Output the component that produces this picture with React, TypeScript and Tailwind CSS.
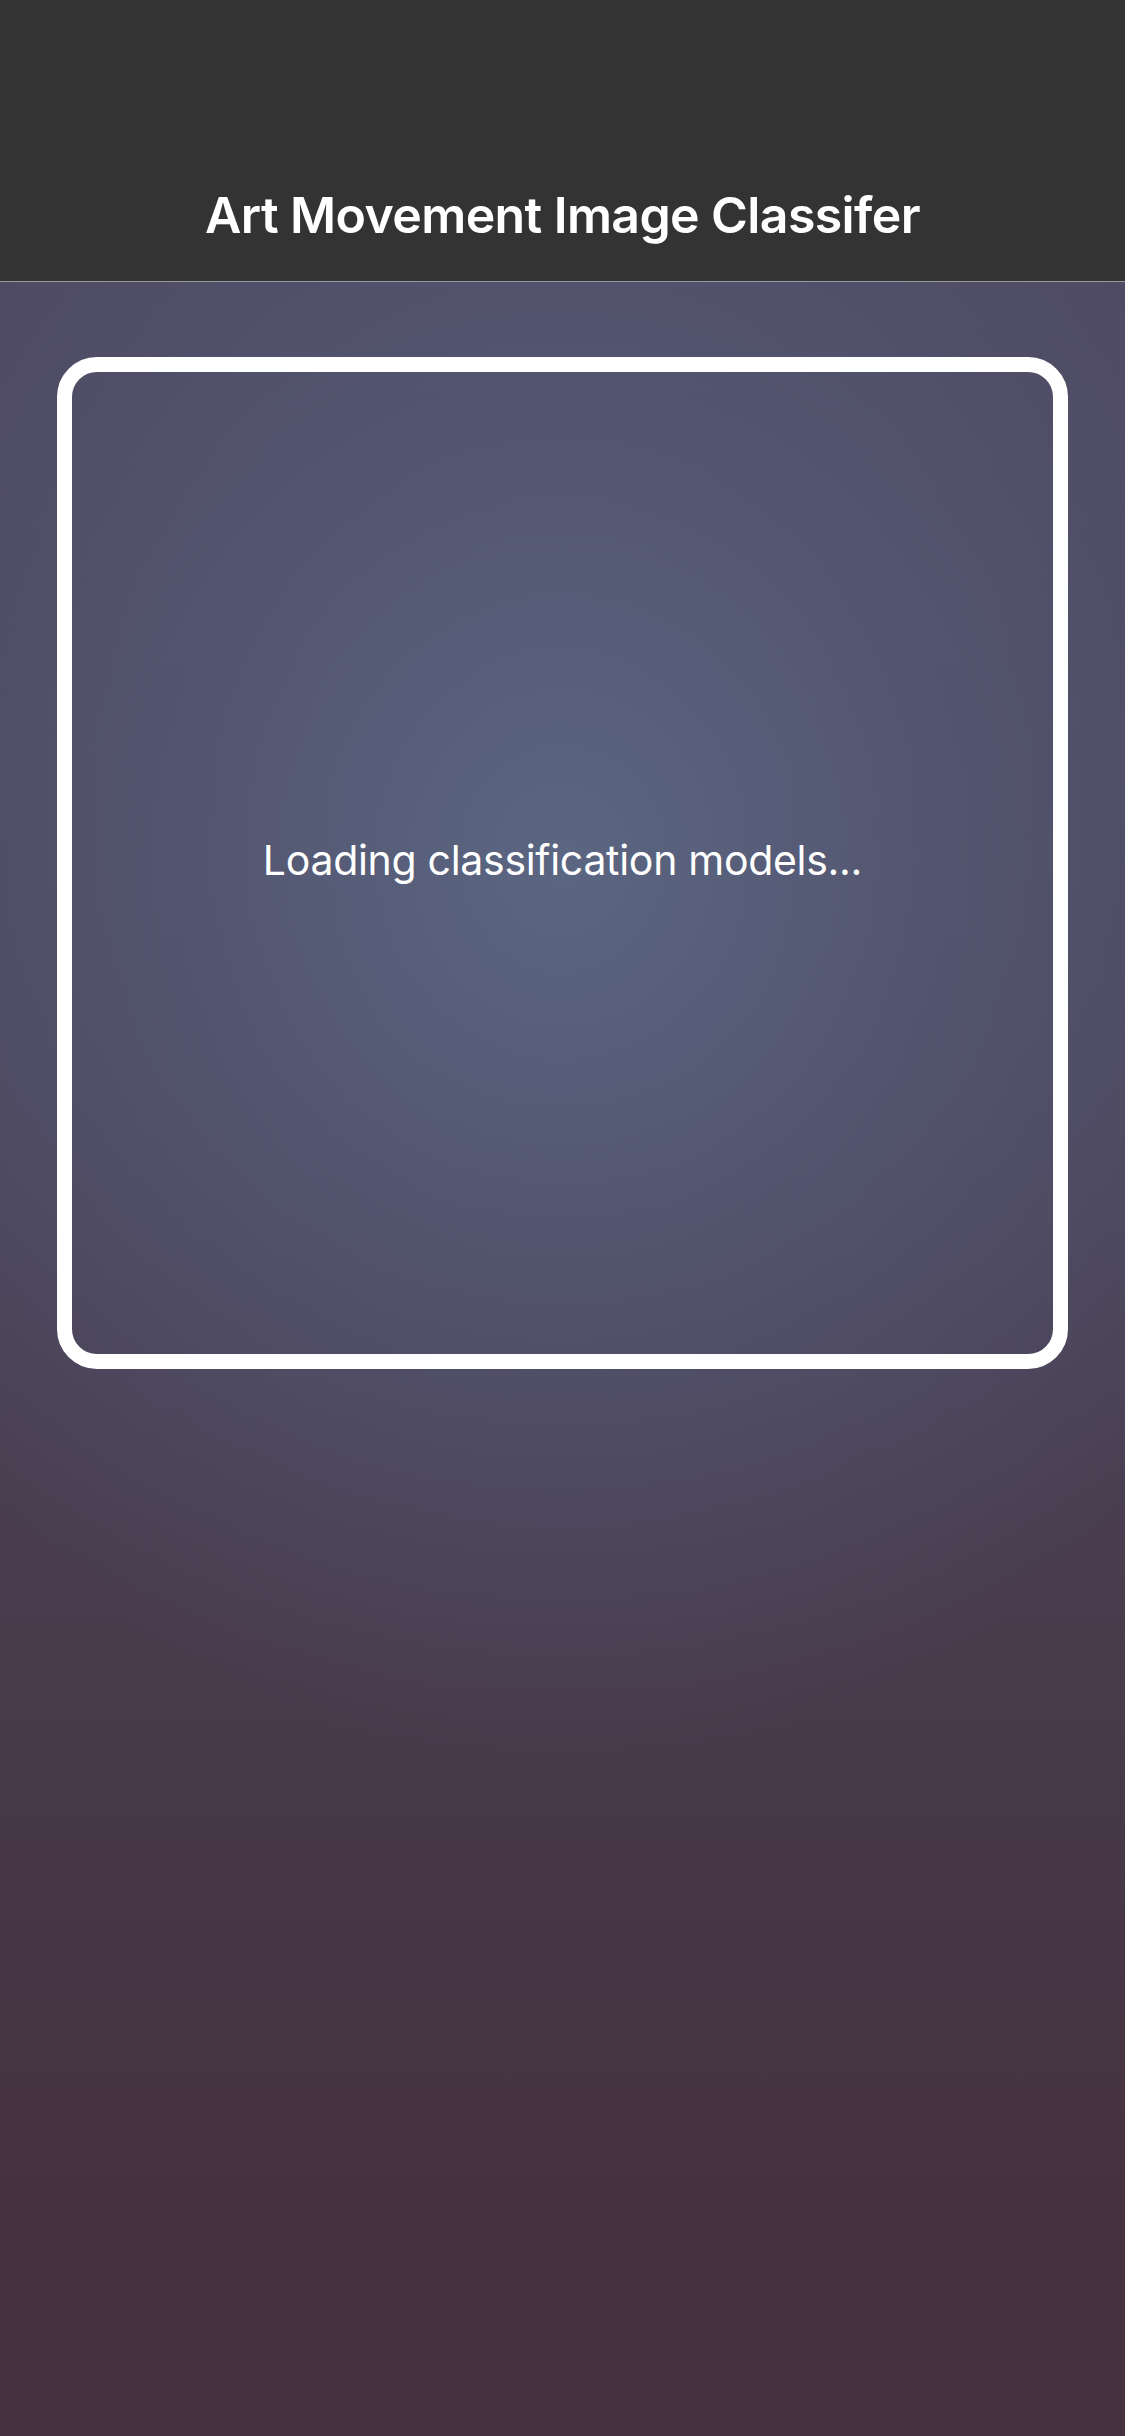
import React from "react";

export default function App() {
  return (
    <div
      className="w-[1125px] h-[2436px] flex flex-col bg-[radial-gradient(ellipse_820px_900px_at_50%_35.4%,rgba(92,104,132,0.95)_0%,rgba(88,96,126,0.6)_45%,rgba(80,76,100,0)_100%),linear-gradient(to_bottom,#4f4b64_0%,#4b4459_45%,#45323f_90%,#45323f_100%)]"
      style={{ fontFamily: "Inter, 'Noto Sans', sans-serif" }}
    >
      <header className="h-[282px] shrink-0 bg-[#333333] border-b border-[#9a9a9e] flex items-end justify-center pb-[35px]">
        <h1 className="text-[50px] leading-[61px] font-semibold text-white tracking-[-0.6px]">
          Art Movement Image Classifer
        </h1>
      </header>
      <main className="px-[57px] pt-[75px]">
        <div className="w-[1011px] h-[1012px] border-[15px] border-white rounded-[40px] flex items-center justify-center">
          <p className="text-[41px] text-white font-normal tracking-[-0.3px] pb-[4px]">Loading classification models...</p>
        </div>
      </main>
    </div>
  );
}
